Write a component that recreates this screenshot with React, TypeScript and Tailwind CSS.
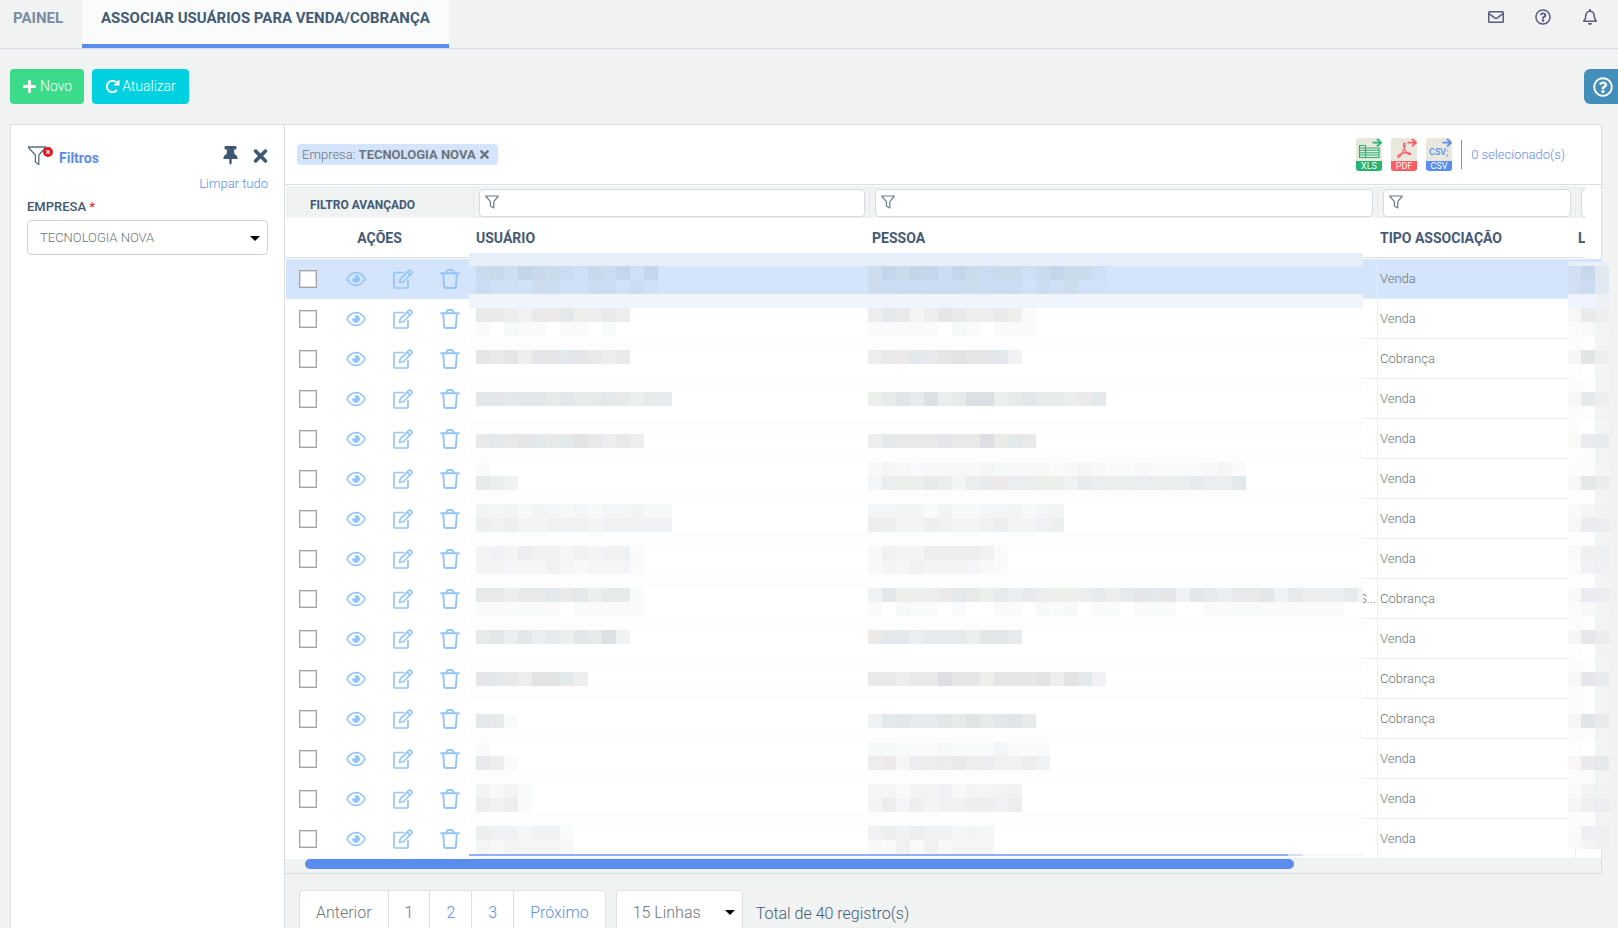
import React from "react";
import { FaPlus, FaRegBell, FaRegQuestionCircle, FaThumbtack, FaTimes } from "react-icons/fa";
import { FaArrowRotateRight } from "react-icons/fa6";

type Kind = "Venda" | "Cobrança";

const rows: Kind[] = [
  "Venda", "Venda", "Cobrança", "Venda", "Venda", "Venda", "Venda", "Venda",
  "Cobrança", "Venda", "Cobrança", "Cobrança", "Venda", "Venda", "Venda",
];

const CELL = 14;

const shades: Record<string, string> = {
  a: "#fafafa", b: "#f7f8f8", c: "#f4f5f6", d: "#f0f1f3", e: "#ecedef", f: "#e8e9eb",
  g: "#e5e6e8", h: "#e2e3e5", i: "#dedfe2", t: "#e3e8eb", u: "#edefed", v: "#ebeae8",
  w: "#f9fbfa", x: "#f8fafc", y: "#f3f5f4", z: "#e7eae9",
  A: "#cadbec", B: "#c5d5ea", C: "#cddef1", D: "#c3d5e7", E: "#c9d8ea", F: "#cadbf2",
  G: "#cfdff6", H: "#ccddf3", I: "#cdddee", J: "#d1e1f8",
};

// [grid row, censored user cells, censored person cells]
const mosaic: [number, string, string][] = [
  [0, "AECDEAFGEFBGB", "IBADBHBAFAAGABAAG"],
  [1, "FGGJIHGGHFJHG", "IFHFHHHIHFHJHGIJJ"],
  [3, "fzedfvtuefe", "etfyegfuefux"],
  [4, "a.baa.ww.w.", "awaww.ba.waa"],
  [6, "gzguggtgfef", "ezvtfghggtd"],
  [9, "ggtggzgzztzuzf", "uzhfieziiuzgfzevt"],
  [12, "ztfgtfthzefe", "etffzgzzivtf"],
  [14, "a..", "bcbxbbbbcbbbbabcbwabwaaabcw"],
  [15, "fud", "ceuufuyefveeuudfeuueeuefeet"],
  [17, "ycybycbcbccybb", "ccyywybbccybcy"],
  [18, "uduyydddyddddd", "euyyudyydeyydu"],
  [20, "ydyeddcdydda", "bdyyeeeedx"],
  [21, "yycccdcbcccw", "bycdyyycbx"],
  [23, "zzufztvtufzw", "dguuevtzufefeuuefufgtgdgfefzgdfeeefy"],
  [24, "wawwwa.aaaaa", "a.bww.x..aa.bwb.aw.aww..aawwaaaxaa"],
  [26, "zgegefugzid", "vttefffuggf"],
  [29, "gtfehhte", "fzezzigguggghehtd"],
  [32, "tzx", "dtgffgzhzghz"],
  [34, "w", "bbwaabwwwcaax"],
  [35, "fux", "evceuefuedded"],
  [37, "ybyw", "ccxyydbycyd"],
  [38, "edex", "yecuydduude"],
  [40, "uddcddw", "dudeddcyc"],
  [41, "cbycccb", "bwdwdbccc"],
];

const bands = [5, 8, 11, 13, 16, 19, 22, 25, 28, 30, 33, 36, 39];

function Mosaic() {
  const draw = (cells: string, x: number, r: number) =>
    cells.split("").map((c, i) =>
      c === "." ? null : (
        <rect key={`${x}-${r}-${i}`} x={x + i * CELL} y={13 + r * CELL} width={CELL} height={CELL} fill={shades[c]} />
      ),
    );
  return (
    <div aria-hidden="true" className="absolute top-[68px] right-[238px] left-[184px] h-[603px] overflow-hidden bg-white">
      <svg className="h-full w-full" shapeRendering="crispEdges">
        <rect width="100%" height="13" fill="#e6eefa" />
        <rect y="13" width="100%" height="28" fill="#d4e4fa" />
        <rect y="41" width="100%" height="14" fill="#f0f5fd" />
        {bands.map((b) => (
          <rect key={b} y={13 + b * CELL} width="100%" height={CELL} fill="#fdfdfd" />
        ))}
        {mosaic.map(([r, user, person]) => (
          <g key={r}>
            {draw(user, 7, r)}
            {draw(person, 399, r)}
          </g>
        ))}
        <rect y="601" width="100%" height="2" fill="#f5f6f7" />
        <rect y="601" width="833" height="2" fill="#d3def5" />
        <rect y="601" width="819" height="2" fill="#8fb0f2" />
      </svg>
    </div>
  );
}

// Three censored columns at the right edge, one triple per grid row
const edge: [string, string, string][] = [
  ["#d0dff2", "#c8d8ea", "#e2e8f0"], ["#d0dff2", "#cbdbf0", "#e2e8f2"], ["#f0f3fd", "#f0f3fd", "#edf1f5"],
  ["#f7f7f7", "#e9eaec", "#edefef"], ["#fbfbfb", "#f9f9f9", "#f3f5f4"], ["#fcfcfc", "#fdfdfd", "#f2f4f3"],
  ["#f6f6f5", "#e1e5e5", "#edefee"], ["#fdfdfd", "#ffffff", "#f3f5f4"], ["#fcfcfc", "#fdfdfd", "#f3f5f4"],
  ["#f7f7f5", "#e5e9e9", "#edefee"], ["#fcfcfc", "#fdfdfd", "#f2f4f3"], ["#fcfcfc", "#ffffff", "#f3f5f4"],
  ["#faf9f8", "#ebebed", "#e8ebee"], ["#fdfdfd", "#fcfcfc", "#f2f4f3"], ["#fcfcfc", "#fbfbfb", "#f3f5f4"],
  ["#f7f7f7", "#e4e8e7", "#ebedec"], ["#fdfdfd", "#fdfdfd", "#f2f4f3"], ["#fafafa", "#f4f5f5", "#f1f3f3"],
  ["#f7f7f7", "#ececee", "#ebedf0"], ["#fdfdfd", "#fdfdfd", "#f2f4f3"], ["#f9f9f9", "#eff0f1", "#edf0f0"],
  ["#fbfbfb", "#f1f2f5", "#eef0f3"], ["#fdfdfd", "#fdfdfd", "#f2f4f3"], ["#f8f8f8", "#ebecef", "#ebedf0"],
  ["#fbfbfb", "#f8f8f8", "#f3f5f4"], ["#fcfcfc", "#fdfdfd", "#f2f4f3"], ["#f6f6f6", "#e6e7e9", "#ebedec"],
  ["#fdfdfd", "#ffffff", "#f1f3f3"], ["#fcfcfc", "#fdfdfd", "#f3f5f4"], ["#f7f7f7", "#e4e6e9", "#e8ebee"],
  ["#fcfcfc", "#fdfdfd", "#f2f4f3"], ["#fcfcfc", "#fdfdfd", "#f2f4f3"], ["#f6f6f6", "#e2e5e5", "#e8eaeb"],
  ["#fcfcfc", "#fcfcfc", "#f2f4f3"], ["#fdfdfd", "#ffffff", "#f2f4f3"], ["#f9f7f6", "#e9eaec", "#e6e9ec"],
  ["#fcfcfc", "#fbfbfb", "#f2f4f3"], ["#fafafa", "#f4f4f4", "#f1f3f3"], ["#f6f6f6", "#eeefef", "#ebedf0"],
  ["#fcfcfc", "#fcfcfc", "#f2f4f3"], ["#fafafa", "#eeeff1", "#edeff1"], ["#f9f9f9", "#f4f4f4", "#eff1f1"],
];

function EdgeMosaic() {
  return (
    <svg aria-hidden="true" className="absolute top-[77px] -right-2 h-[587px] w-[41px]" shapeRendering="crispEdges">
      <rect width="41" height="4" fill="#e8eff8" />
      {edge.map((triple, r) =>
        triple.map((fill, i) => (
          <rect key={`${r}-${i}`} x={i * CELL - (i ? 1 : 0)} y={4 + r * CELL} width={CELL} height={CELL} fill={fill} />
        )),
      )}
    </svg>
  );
}

function Funnel({ className }: { className: string }) {
  return (
    <svg viewBox="0 0 14 14" className={className} fill="none" stroke="currentColor" strokeWidth="1.2" strokeLinejoin="round">
      <path d="M.7 1h12.6L8.8 6.6V13L5.4 11V6.6Z" />
    </svg>
  );
}

function FunnelClear() {
  return (
    <svg viewBox="0 0 26 21" className="h-[21px] w-[26px] text-[#5b6f82]" fill="none">
      <path d="M1 2h18M1.2 2.2 8.4 10v7l3.4 2.6V10l6.7-7.5" stroke="currentColor" strokeWidth="1.3" strokeLinejoin="round" />
      <circle cx="21" cy="7" r="5" fill="#e8141e" />
      <path d="m19.2 5.2 3.6 3.6m0-3.6-3.6 3.6" stroke="#fff" strokeWidth="1.2" />
    </svg>
  );
}

function Eye() {
  return (
    <svg viewBox="0 0 20 20" className="size-5" fill="none">
      <path d="M1 10C3 6 6.3 3.6 10 3.6S17 6 19 10c-2 4-5.3 6.4-9 6.4S3 14 1 10Z" stroke="currentColor" strokeWidth="1.6" strokeLinejoin="round" />
      <path d="M10 6a4 4 0 1 1-3.9 3.2c.9.7 2.1.6 2.7-.1.7-.8.6-2.1-.1-2.9A4 4 0 0 1 10 6Z" fill="currentColor" />
    </svg>
  );
}

function Edit() {
  return (
    <svg viewBox="0 0 20 20" className="size-5" fill="none" stroke="currentColor" strokeWidth="1.7" strokeLinejoin="round" strokeLinecap="round">
      <path d="M10.5 3.5H2a1 1 0 0 0-1 1V18a1 1 0 0 0 1 1h12a1 1 0 0 0 1-1v-6.5" />
      <path d="m6.5 13.5.6-3.4 8.7-8.7a1.3 1.3 0 0 1 1.9 0l1 1a1.3 1.3 0 0 1 0 1.900L10 13Zm7.7-10.4 2.8 2.8" />
    </svg>
  );
}

function Trash() {
  return (
    <svg viewBox="0 0 20 20" className="size-5" fill="none" stroke="currentColor" strokeWidth="1.9" strokeLinejoin="round" strokeLinecap="round">
      <path d="M1 4.2h18M3.2 4.5l.9 13a1.5 1.5 0 0 0 1.5 1.5h8.8a1.5 1.5 0 0 0 1.5-1.5l.9-13M6 4l1.3-2.4a1 1 0 0 1 .9-.6h3.6a1 1 0 0 1 .9.6L14 4" />
    </svg>
  );
}

function Mail() {
  return (
    <svg viewBox="0 0 16 12" className="h-3 w-4" fill="none" stroke="currentColor" strokeWidth="1.5" strokeLinejoin="round">
      <rect x=".75" y=".75" width="14.5" height="10.5" rx=".8" />
      <path d="m1 2.6 5.6 4.2a2.3 2.3 0 0 0 2.8 0L15 2.6" />
    </svg>
  );
}

function FileIcon({ label, color, children }: { label: string; color: string; children: React.ReactNode }) {
  return (
    <svg viewBox="0 0 26 33" className="h-[33px] w-[26px]" role="img" aria-label={label}>
      <rect width="26" height="33" rx="3" fill="#e8e8df" />
      <path d="M0 23h26v7a3 3 0 0 1-3 3H3a3 3 0 0 1-3-3Z" fill={color} />
      <path d="M16.5 4.7H25M21 1l4 3.7-4 3.7" fill="none" stroke={color} strokeWidth="1.8" />
      {children}
      <text x="13" y="31" textAnchor="middle" fill="#fff" className="font-['Roboto'] text-[9px] font-normal">{label}</text>
    </svg>
  );
}

function Caret({ className }: { className: string }) {
  return (
    <svg viewBox="0 0 10 5" className={`pointer-events-none absolute h-[5px] w-[10px] ${className}`} aria-hidden="true">
      <path d="M0 0h10L5 5Z" fill="#000" />
    </svg>
  );
}

function FilterCell({ label }: { label: string }) {
  return (
    <th className="h-8 border-l border-[#e9ebed] bg-[#f1f3f3] pt-[3px] pr-1 pb-px pl-[5px] font-light">
      <div className="relative h-7">
        <input aria-label={label} className="block h-7 w-full rounded-[4px] border border-[#d8dadd] bg-white pl-7 text-[13px] outline-none" />
        <Funnel className="absolute top-[6px] left-[6px] size-[14px] text-[#6d7d8b]" />
      </div>
    </th>
  );
}

function HeadCell({ children, center }: { children?: React.ReactNode; center?: boolean }) {
  return (
    <th className="h-[41px] p-0 align-top">
      <div className={`flex h-10 items-center border-b border-[#dadde2] pt-[2px] ${center ? "justify-center" : "pl-[3px]"}`}>{children}</div>
    </th>
  );
}

function Row({ kind, index }: { kind: Kind; index: number }) {
  const tone = index === 0 ? "bg-[#d4e4fa]" : "bg-white";
  const cell = "h-10 border-b border-l border-[#ebecee] py-0 pr-px pl-[2px]";
  return (
    <tr className={tone}>
      <td className="h-10 p-0 pl-[13px]">
        <div className="flex items-center gap-[27px] text-[#93c5fd]">
          <input type="checkbox" aria-label={`Selecionar linha ${index + 1}`} className="mr-[2px] size-[18px] appearance-none border border-[#a3a3a3] bg-white ring-1 ring-[#dcdcdc] ring-inset checked:bg-[#5b8def]" />
          <button type="button" aria-label="Visualizar"><Eye /></button>
          <button type="button" aria-label="Editar"><Edit /></button>
          <button type="button" aria-label="Excluir"><Trash /></button>
        </div>
      </td>
      <td className={cell} />
      <td className={`${cell} text-right`}>{index === 8 ? "S..." : null}</td>
      <td className={cell}>{kind}</td>
      <td colSpan={2} className={cell} />
    </tr>
  );
}

export default function App() {
  const page = "flex h-full items-center border-r border-[#dee2e6] px-4";
  return (
    <div className="flex h-screen flex-col overflow-hidden bg-[#f1f3f3] font-['Roboto',sans-serif] text-[13px] font-light text-[#6c757d]">
      <header className="flex h-[49px] shrink-0 items-start justify-between border-b border-[#dadde3]">
        <nav className="flex h-12 text-[15px] font-bold">
          <a href="#painel" className="flex w-[82px] items-start pt-[7px] pl-[13px] leading-[22px] text-[#7a8da2]">PAINEL</a>
          <a href="#associar" className="border-b-4 border-[#5b8def] bg-[#fafcfb] px-[19px] pt-[7px] leading-[22px] text-[#435a77]">
            ASSOCIAR USUÁRIOS PARA VENDA/COBRANÇA
          </a>
        </nav>
        <div className="flex h-[34px] items-center gap-[31px] pr-5 text-[16px] text-[#5a5a85]">
          <button type="button" aria-label="Mensagens"><Mail /></button>
          <button type="button" aria-label="Ajuda"><FaRegQuestionCircle /></button>
          <button type="button" aria-label="Notificações"><FaRegBell /></button>
        </div>
      </header>

      <div className="flex h-[75px] shrink-0 items-center justify-between pl-[10px]">
        <div className="flex gap-2 text-[14px] text-white">
          <button type="button" className="flex h-[35px] items-center gap-[3px] rounded-[4px] bg-[#3bdb8b] px-3">
            <FaPlus className="size-[15px]" />Novo
          </button>
          <button type="button" className="flex h-[35px] items-center gap-[2px] rounded-[4px] bg-[#00d1e0] px-[13px]">
            <FaArrowRotateRight className="size-[15px]" />Atualizar
          </button>
        </div>
        <button type="button" aria-label="Abrir ajuda" className="flex h-[35px] w-[34px] items-center justify-center rounded-l-[6px] bg-[#448eba] pl-1 text-[20px] text-white">
          <FaRegQuestionCircle />
        </button>
      </div>

      <div className="mr-4 ml-[10px] flex min-h-0 flex-1">
        <aside className="w-[275px] shrink-0 border border-b-0 border-[#dadde3] bg-white px-4 pt-5">
          <div className="flex h-[22px] items-start text-[#3f5873]">
            <FunnelClear />
            <h2 className="mt-[3px] ml-[6px] text-[14px] leading-[20px] font-bold text-[#5b8def]">Filtros</h2>
            <button type="button" aria-label="Fixar filtros" className="mt-px ml-auto"><FaThumbtack className="h-[19px] w-[15px]" /></button>
            <button type="button" aria-label="Fechar filtros" className="mt-px ml-[15px]"><FaTimes className="h-[20px] w-[15px]" /></button>
          </div>
          <div className="mt-[6px] text-right">
            <a href="#limpar" className="text-[13px] leading-[22px] text-[#5b8def]">Limpar tudo</a>
          </div>
          <label htmlFor="empresa" className="mt-[3px] block text-[13px] leading-[18px] font-medium text-[#3f5873]">
            EMPRESA <span className="text-[#ee2d38]">*</span>
          </label>
          <div className="relative mt-1">
            <select id="empresa" className="h-[35px] w-full appearance-none rounded-[4px] border border-[#ced2d8] bg-white pl-3 text-[13px]">
              <option>TECNOLOGIA NOVA</option>
            </select>
            <Caret className="top-4 right-2" />
          </div>
        </aside>

        <div className="min-w-0 flex-1">
          <main className="relative border-y border-r border-[#dadde3] bg-white">
            <div className="flex h-[60px] items-center justify-between border-b border-[#dadde3] pr-9 pl-3">
              <span className="flex h-[21px] items-center rounded-[4px] bg-[#d4e4fa] pr-[7px] pl-[5px]">
                Empresa:&nbsp;<b className="font-bold">TECNOLOGIA NOVA</b>
                <button type="button" aria-label="Remover filtro" className="ml-[2px]"><FaTimes className="size-[13px]" /></button>
              </span>
              <div className="flex items-center gap-[9px]">
                <button type="button"><FileIcon label="XLS" color="#28b473">
                  <path d="M3.5 7.5h6v2.5H23v9.5H3.5ZM3.5 10h6m-6 2.3H23m-19.5 2.4H23M3.5 17H23M9.5 10v9.5" fill="none" stroke="#28b473" strokeWidth="1.1" />
                </FileIcon></button>
                <button type="button"><FileIcon label="PDF" color="#ff5b62">
                  <path d="M12.5 6.5c0-2 2-2 1.7.2C13.5 11 10 18.5 7.5 19.3c-1.5.2-1-1.7 1-2.7 3-1.6 7-2.2 9.7-1.8 2.2.5 1.8 2 .2 1.6-2.9-.8-5.9-5.4-5.9-9.900Z" fill="none" stroke="#ff5b62" strokeWidth="1.2" />
                </FileIcon></button>
                <button type="button"><FileIcon label="CSV" color="#5b8def">
                  <text x="3" y="17" fill="#5b8def" className="font-['Roboto'] text-[9px] font-medium">CSV;</text>
                </FileIcon></button>
                <span className="h-[29px] w-px bg-[#8c9095]" />
                <a href="#selecionados" className="text-[13px] text-[#5b8def]">0 selecionado(s)</a>
              </div>
            </div>

            <div className="overflow-hidden pt-px pl-px">
              <table className="w-full table-fixed border-separate border-spacing-0 text-left">
                <colgroup>
                  <col className="w-[187px]" />
                  <col className="w-[396px]" />
                  <col />
                  <col className="w-[198px]" />
                  <col className="w-[10px]" />
                  <col className="w-4" />
                </colgroup>
                <thead className="text-[14px] text-[#435a77] [&_th]:font-bold">
                  <tr>
                    <th className="h-8 bg-[#f1f3f3] pt-[6px] pb-0 pl-6 text-[12px]">FILTRO AVANÇADO</th>
                    <FilterCell label="Filtrar usuário" />
                    <FilterCell label="Filtrar pessoa" />
                    <FilterCell label="Filtrar tipo associação" />
                    <th className="border-l border-[#e9ebed] bg-[#f1f3f3] pt-[3px] pr-0 pb-px pl-[5px]">
                      <div className="h-7 rounded-l-[4px] border border-r-0 border-[#d8dadd] bg-white" />
                    </th>
                    <th className="p-0" />
                  </tr>
                  <tr>
                    <HeadCell center>AÇÕES</HeadCell>
                    <HeadCell>USUÁRIO</HeadCell>
                    <HeadCell>PESSOA</HeadCell>
                    <HeadCell>TIPO ASSOCIAÇÃO</HeadCell>
                    <th className="h-[41px] p-0 align-top">
                      <div className="flex h-10 items-center overflow-hidden border-b border-[#dadde2] pt-[2px] pl-[3px]">L</div>
                    </th>
                    <th className="p-0" />
                  </tr>
                </thead>
                <tbody>
                  {rows.map((kind, i) => (
                    <Row key={i} kind={kind} index={i} />
                  ))}
                </tbody>
              </table>
            </div>
            <div className="h-[14px] bg-[#f1f3f3] pl-5">
              <div className="h-[10px] w-[76.3%] rounded-full bg-[#5b8def]" />
            </div>
            <div className="absolute inset-x-0 top-[60px] h-0">
              <Mosaic />
              <EdgeMosaic />
            </div>
          </main>

          <div className="mt-4 flex gap-[10px] pl-[14px] text-[16px]">
            <nav aria-label="Paginação" className="flex h-[46px] rounded-[4px] border border-r-0 border-[#dee2e6] bg-white">
              <button type="button" className={page}>Anterior</button>
              <button type="button" className={page}>1</button>
              <button type="button" className={`${page} text-[#5b8def]`}>2</button>
              <button type="button" className={`${page} text-[#5b8def]`}>3</button>
              <button type="button" className={`${page} rounded-r-[4px] text-[#5b8def]`}>Próximo</button>
            </nav>
            <div className="relative">
              <select aria-label="Linhas por página" className="h-[46px] w-[127px] appearance-none rounded-[4px] border border-[#dee2e6] bg-white pl-4">
                <option>15 Linhas</option>
              </select>
              <Caret className="top-5 right-2" />
            </div>
            <p className="ml-[3px] leading-[48px] text-[#435a77]">Total de 40 registro(s)</p>
          </div>
        </div>
      </div>
    </div>
  );
}
